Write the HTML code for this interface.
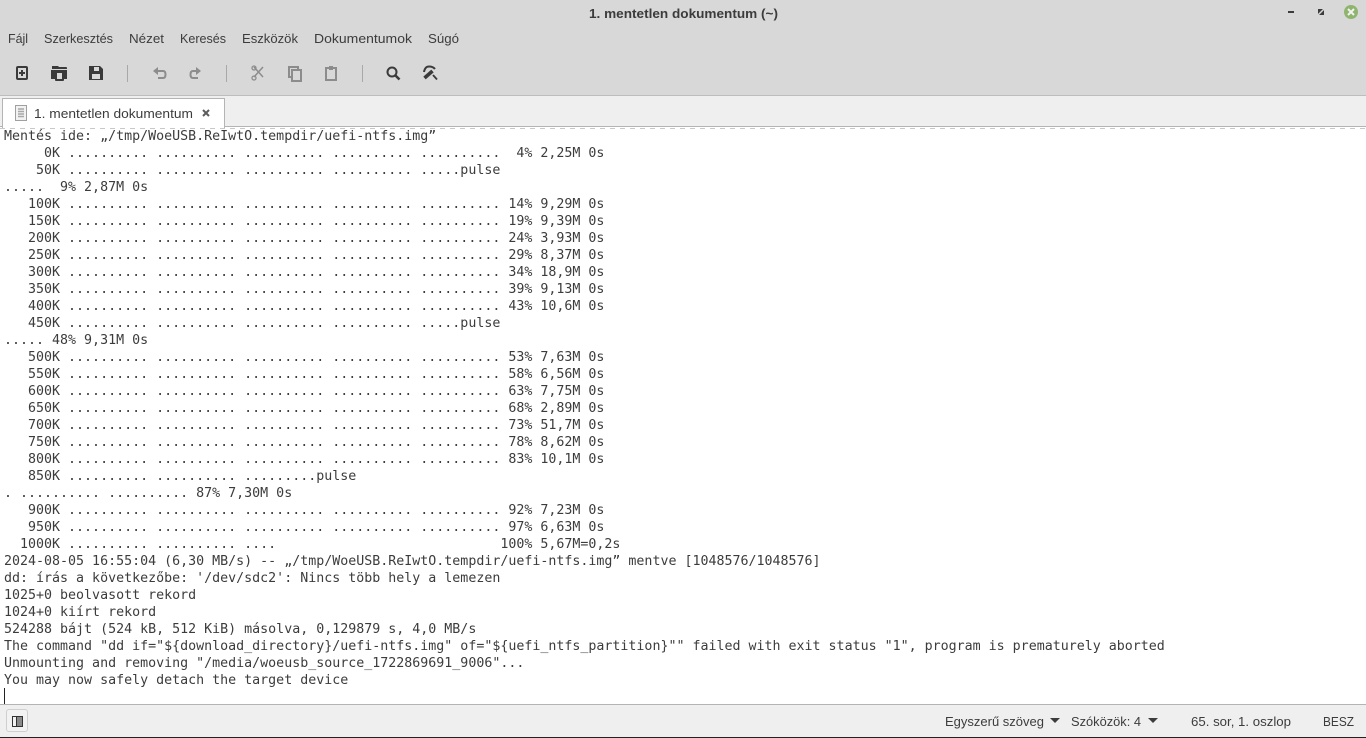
<!DOCTYPE html>
<html lang="hu"><head><meta charset="utf-8"><title>1. mentetlen dokumentum (~)</title>
<style>
html,body{margin:0;padding:0;width:1366px;height:738px;overflow:hidden;background:#fff}
#top{position:absolute;left:0;top:0;width:1366px;height:95px;background:#d8d8d8}
#sep{position:absolute;left:0;top:95px;width:1366px;height:1px;background:#bdbdbd}
#tabbar{position:absolute;left:0;top:96px;width:1366px;height:30px;background:#efefef}
#tabline{position:absolute;left:0;top:126px;width:1366px;height:1px;background:#b4b4b4}
#tab{position:absolute;left:2px;top:98px;width:223px;height:30px;box-sizing:border-box;background:#fff;border:1px solid #b4b4b4;border-bottom:none}
#dash{position:absolute;left:0;top:128px;width:1366px;height:1px;background:repeating-linear-gradient(90deg,#c8c8c8 0 5px,#fff 5px 10px)}
pre{position:absolute;left:4px;top:128px;margin:0;font:13.3px/17px "DejaVu Sans Mono",monospace;color:#3c3c3c;white-space:pre}
#cursor{position:absolute;left:4px;top:688px;width:1px;height:16px;background:#222}
#status{position:absolute;left:0;top:704px;width:1366px;height:33px;background:#efefef;border-top:1px solid #b4b4b4;box-sizing:border-box}
#bottom{position:absolute;left:0;top:737px;width:1366px;height:1px;background:#222}
#btn{position:absolute;left:6px;top:709px;width:22px;height:23px;box-sizing:border-box;border:1px solid #cfcfcf;border-radius:3px;background:#f2f2f2}
svg{position:absolute;left:0;top:0}
svg text{font-family:"Liberation Sans",sans-serif;font-size:13px;fill:#3c3c3c}
</style></head><body>
<div id="top"></div><div id="sep"></div><div id="tabbar"></div><div id="tabline"></div><div id="tab"></div><div id="dash"></div>
<pre>Mentés ide: „/tmp/WoeUSB.ReIwtO.tempdir/uefi-ntfs.img”
     0K .......... .......... .......... .......... ..........  4% 2,25M 0s
    50K .......... .......... .......... .......... .....pulse
.....  9% 2,87M 0s
   100K .......... .......... .......... .......... .......... 14% 9,29M 0s
   150K .......... .......... .......... .......... .......... 19% 9,39M 0s
   200K .......... .......... .......... .......... .......... 24% 3,93M 0s
   250K .......... .......... .......... .......... .......... 29% 8,37M 0s
   300K .......... .......... .......... .......... .......... 34% 18,9M 0s
   350K .......... .......... .......... .......... .......... 39% 9,13M 0s
   400K .......... .......... .......... .......... .......... 43% 10,6M 0s
   450K .......... .......... .......... .......... .....pulse
..... 48% 9,31M 0s
   500K .......... .......... .......... .......... .......... 53% 7,63M 0s
   550K .......... .......... .......... .......... .......... 58% 6,56M 0s
   600K .......... .......... .......... .......... .......... 63% 7,75M 0s
   650K .......... .......... .......... .......... .......... 68% 2,89M 0s
   700K .......... .......... .......... .......... .......... 73% 51,7M 0s
   750K .......... .......... .......... .......... .......... 78% 8,62M 0s
   800K .......... .......... .......... .......... .......... 83% 10,1M 0s
   850K .......... .......... .........pulse
. .......... .......... 87% 7,30M 0s
   900K .......... .......... .......... .......... .......... 92% 7,23M 0s
   950K .......... .......... .......... .......... .......... 97% 6,63M 0s
  1000K .......... .......... ....                            100% 5,67M=0,2s
2024-08-05 16:55:04 (6,30 MB/s) -- „/tmp/WoeUSB.ReIwtO.tempdir/uefi-ntfs.img” mentve [1048576/1048576]
dd: írás a következőbe: '/dev/sdc2': Nincs több hely a lemezen
1025+0 beolvasott rekord
1024+0 kiírt rekord
524288 bájt (524 kB, 512 KiB) másolva, 0,129879 s, 4,0 MB/s
The command "dd if="${download_directory}/uefi-ntfs.img" of="${uefi_ntfs_partition}"" failed with exit status "1", program is prematurely aborted
Unmounting and removing "/media/woeusb_source_1722869691_9006"...
You may now safely detach the target device</pre>
<div id="cursor"></div>
<div id="status"></div><div id="bottom"></div><div id="btn"></div>
<svg width="1366" height="738" viewBox="0 0 1366 738">
<text x="589" y="18" style="font-weight:bold" textLength="189" lengthAdjust="spacingAndGlyphs">1. mentetlen dokumentum (~)</text>
<rect x="1288" y="11" width="6" height="2" fill="#3c3c3c"/>
<rect x="1318" y="9" width="6" height="6" fill="#3c3c3c"/>
<path d="M1317.500 15.500l7-7" stroke="#d8d8d8" stroke-width="1.500"/>
<circle cx="1351" cy="12" r="7" fill="#8fb46e"/>
<path d="M1348 9l6 6M1354 9l-6 6" stroke="#f2f2f2" stroke-width="2"/>

<text x="8" y="43" textLength="20" lengthAdjust="spacingAndGlyphs">Fájl</text>
<text x="44" y="43" textLength="69" lengthAdjust="spacingAndGlyphs">Szerkesztés</text>
<text x="129" y="43" textLength="35" lengthAdjust="spacingAndGlyphs">Nézet</text>
<text x="180" y="43" textLength="46" lengthAdjust="spacingAndGlyphs">Keresés</text>
<text x="242" y="43" textLength="56" lengthAdjust="spacingAndGlyphs">Eszközök</text>
<text x="314" y="43" textLength="98" lengthAdjust="spacingAndGlyphs">Dokumentumok</text>
<text x="428" y="43" textLength="31" lengthAdjust="spacingAndGlyphs">Súgó</text>

<!-- toolbar -->
<g fill="none" stroke="#3a3a3a" stroke-width="2">
<rect x="17" y="67" width="10" height="12" rx="1"/>
<path d="M19 73h6M22 70v6" stroke-width="2"/>
</g>
<path d="M52 66h6l1 1h7q1 0 1 1v1h-15z" fill="#3a3a3a"/>
<path d="M51 70h16v9h-16z" fill="#3a3a3a"/>
<rect x="55" y="71" width="9" height="10" rx="1" fill="#3a3a3a"/>
<rect x="57" y="73" width="5" height="6" fill="#d8d8d8"/>
<path d="M89 66h11l3 3v11h-14z" fill="#3a3a3a"/>
<rect x="94" y="67" width="5" height="4" fill="#d8d8d8"/>
<rect x="92" y="74" width="8" height="5" fill="#d8d8d8"/>
<rect x="127" y="65" width="1" height="17" fill="#a8a8a8"/>
<rect x="226" y="65" width="1" height="17" fill="#a8a8a8"/>
<rect x="362" y="65" width="1" height="17" fill="#a8a8a8"/>
<g fill="none" stroke="#8c8c8c" stroke-width="2">
<path d="M156 71h7q2.500 0 2.500 3.500t-2.500 3.500h-5"/>
<path d="M158 67l-5 4 5 4z" fill="#8c8c8c" stroke="none"/>
<path d="M200 71h-7q-2.500 0-2.500 3.500t2.500 3.500h5"/>
<path d="M196 67l5 4-5 4z" fill="#8c8c8c" stroke="none"/>
<path d="M254 67l9 10M263 67l-9 10" stroke-width="1.500"/>
<circle cx="254" cy="68" r="2" stroke-width="1.300"/><circle cx="254" cy="78" r="2" stroke-width="1.300"/>
<path d="M292 77h-3v-10h9v2"/>
<rect x="292" y="70" width="9" height="11"/>
<rect x="326" y="68" width="10" height="12"/>
<rect x="329" y="66" width="4" height="4" fill="#8c8c8c" stroke="none"/>
</g>
<g fill="none" stroke="#3a3a3a" stroke-width="2">
<circle cx="392" cy="72" r="4.500"/>
<path d="M395.500 75.500l4 4" stroke-width="2.600"/>
<path d="M424 72q1-5.500 5-5.500t6 2.500" stroke-width="2"/>
<path d="M424.500 78l8-7" stroke-width="3.600"/>
<path d="M433 75l4 4.500" stroke-width="1.800"/>
</g>

<!-- tab -->
<rect x="15.500" y="105.500" width="11" height="15" fill="#f2f2f2" stroke="#a0a0a0"/>
<path d="M18 109h6M18 111.500h6M18 114h6M18 116.500h6" stroke="#a8a8a8" stroke-width="1.500"/>
<text x="34" y="118" textLength="159" lengthAdjust="spacingAndGlyphs">1. mentetlen dokumentum</text>
<path d="M203 110l6 6M209 110l-6 6" stroke="#5c5c5c" stroke-width="2"/>

<!-- status -->
<rect x="12.500" y="716.500" width="10" height="10" fill="#8a8a8a" stroke="#333"/>
<rect x="13" y="717" width="3" height="9" fill="#f2f2f2"/>
<path d="M16.500 717v10" stroke="#333"/>
<text x="945" y="726" textLength="99" lengthAdjust="spacingAndGlyphs">Egyszerű szöveg</text>
<path d="M1050 718h10l-5 5z" fill="#3c3c3c"/>
<text x="1071" y="726" textLength="70" lengthAdjust="spacingAndGlyphs">Szóközök: 4</text>
<path d="M1148 718h10l-5 5z" fill="#3c3c3c"/>
<text x="1191" y="726" textLength="100" lengthAdjust="spacingAndGlyphs">65. sor, 1. oszlop</text>
<text x="1323" y="726" textLength="31" lengthAdjust="spacingAndGlyphs">BESZ</text>
</svg>
</body></html>
